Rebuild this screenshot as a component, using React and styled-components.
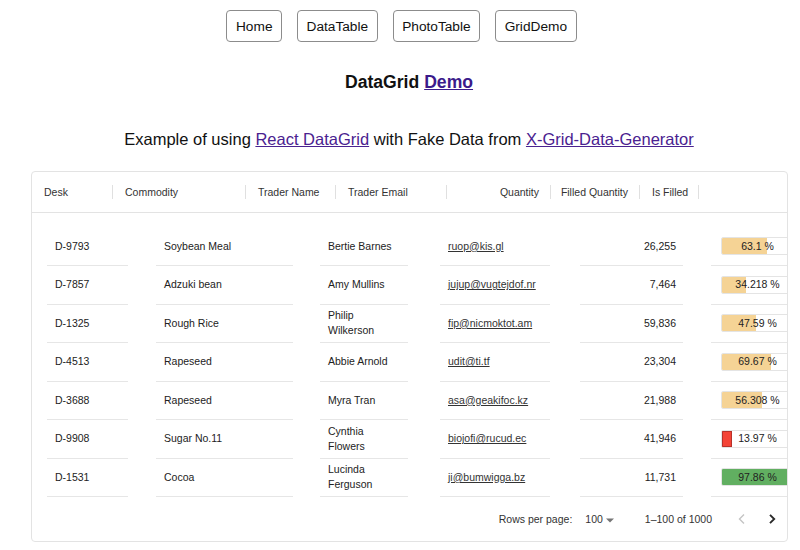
import React from "react";
// styling
import styled, { createGlobalStyle } from "styled-components";

// fake rows like the x-grid-data-generator commodity set
const rows = [
  { desk: "D-9793", commodity: "Soybean Meal", trader: "Bertie Barnes", email: "ruop@kis.gl", quantity: "26,255", filled: 63.1 },
  { desk: "D-7857", commodity: "Adzuki bean", trader: "Amy Mullins", email: "jujup@vugtejdof.nr", quantity: "7,464", filled: 34.218 },
  { desk: "D-1325", commodity: "Rough Rice", trader: "Philip Wilkerson", email: "fip@nicmoktot.am", quantity: "59,836", filled: 47.59 },
  { desk: "D-4513", commodity: "Rapeseed", trader: "Abbie Arnold", email: "udit@ti.tf", quantity: "23,304", filled: 69.67 },
  { desk: "D-3688", commodity: "Rapeseed", trader: "Myra Tran", email: "asa@geakifoc.kz", quantity: "21,988", filled: 56.308 },
  { desk: "D-9908", commodity: "Sugar No.11", trader: "Cynthia Flowers", email: "biojofi@rucud.ec", quantity: "41,946", filled: 13.97 },
  { desk: "D-1531", commodity: "Cocoa", trader: "Lucinda Ferguson", email: "ji@bumwigga.bz", quantity: "11,731", filled: 97.86 },
];

const headers = [
  { label: "Desk", width: 81 },
  { label: "Commodity", width: 133 },
  { label: "Trader Name", width: 90 },
  { label: "Trader Email", width: 111 },
  { label: "Quantity", width: 104, right: true },
  { label: "Filled Quantity", width: 89, right: true },
  { label: "Is Filled", width: 59 },
];

const navItems = ["Home", "DataTable", "PhotoTable", "GridDemo"];

// bar colour by level
const barLevel = (value) => {
  if (value < 30) return "low";
  if (value < 70) return "medium";
  return "high";
};

const ProgressBar = ({ value }) => (
  <BarRoot>
    <BarValue>{value.toLocaleString("en-US", { maximumFractionDigits: 3 })} %</BarValue>
    <Bar $level={barLevel(value)} style={{ width: `${value}%` }} />
  </BarRoot>
);

const App = () => {
  return (
    <>
      <GlobalStyle />
      <Nav>
        {navItems.map((item) => (
          <NavButton key={item}>{item}</NavButton>
        ))}
      </Nav>
      <Title>
        DataGrid <a href="#demo">Demo</a>
      </Title>
      <Subtitle>
        Example of using <a href="#datagrid">React DataGrid</a> with Fake Data
        from <a href="#generator">X-Grid-Data-Generator</a>
      </Subtitle>
      <Grid>
        <Header>
          {headers.map((h) => (
            <HeaderCell key={h.label} $width={h.width} $right={h.right}>
              <span>{h.label}</span>
              <Separator />
            </HeaderCell>
          ))}
        </Header>
        <Body>
          {rows.map((row) => (
            <Row key={row.desk}>
              <Cell $ml={15} $width={81}>{row.desk}</Cell>
              <Cell $ml={28} $width={137}>{row.commodity}</Cell>
              <Cell $ml={27} $width={88}>{row.trader}</Cell>
              <Cell $ml={32} $width={110}>
                <Email href={`mailto:${row.email}`}>{row.email}</Email>
              </Cell>
              <Cell $ml={30} $width={103} $right>
                {row.quantity}
              </Cell>
              <BarCell $ml={28} $width={110}>
                <ProgressBar value={row.filled} />
              </BarCell>
            </Row>
          ))}
        </Body>
        <Footer>
          <span>Rows per page:</span>
          <Select>
            100
            <svg width="10" height="10" viewBox="0 0 10 10">
              <path d="M1 3.5 L5 7.5 L9 3.5 Z" fill="#757575" />
            </svg>
          </Select>
          <Displayed>1–100 of 1000</Displayed>
          <Actions>
            <PageButton>
              <svg width="10" height="12" viewBox="0 0 10 12">
                <path d="M7 1.5 L2.5 6 L7 10.5" fill="none" stroke="#c4c4c4" strokeWidth="1.4" />
              </svg>
            </PageButton>
            <PageButton>
              <svg width="10" height="12" viewBox="0 0 10 12">
                <path d="M3 1.8 L7.2 6 L3 10.2" fill="none" stroke="#2a2a2a" strokeWidth="1.9" />
              </svg>
            </PageButton>
          </Actions>
        </Footer>
      </Grid>
    </>
  );
};

const GlobalStyle = createGlobalStyle`
  body {
    margin: 0;
    background: #ffffff;
    font-family: "Liberation Sans", Arial, Helvetica, sans-serif;
    color: #111;
  }
`;

const Nav = styled.nav`
  display: flex;
  justify-content: center;
  gap: 15px;
  padding-top: 10px;
  padding-left: 3px;
`;

const NavButton = styled.button`
  height: 32px;
  padding: 0 8.5px;
  background: #ffffff;
  border: 1px solid #8c8c8c;
  border-radius: 4px;
  font-family: "Liberation Sans", Arial, sans-serif;
  font-size: 13.7px;
  color: #111;
`;

const Title = styled.h2`
  margin: 30px 0 0;
  padding-left: 18px;
  text-align: center;
  font-size: 17.6px;
  line-height: 20px;
  font-weight: bold;
  a {
    color: #3b1a8b;
  }
`;

const Subtitle = styled.h3`
  margin: 37px 0 0;
  padding-left: 18px;
  text-align: center;
  font-size: 16.5px;
  line-height: 20px;
  font-weight: normal;
  a {
    color: #4a2290;
  }
`;

const Grid = styled.div`
  margin: 22px 0 0 31px;
  width: 757px;
  box-sizing: border-box;
  border: 1px solid #e3e3e3;
  border-radius: 4px;
  overflow: hidden;
  font-size: 10.5px;
  color: #222;
`;

const Header = styled.div`
  display: flex;
  height: 41px;
  border-bottom: 1px solid #e3e3e3;
  box-sizing: border-box;
  color: #333;
`;

const HeaderCell = styled.div`
  position: relative;
  flex: none;
  width: ${(p) => p.$width}px;
  display: flex;
  align-items: center;
  justify-content: ${(p) => (p.$right ? "flex-end" : "flex-start")};
  padding: 0 12px;
  box-sizing: border-box;
  white-space: nowrap;
`;

const Separator = styled.div`
  position: absolute;
  right: 0;
  top: 13px;
  width: 1px;
  height: 14px;
  background: #e0e0e0;
`;

const Body = styled.div`
  padding-top: 14.5px;
`;

const Row = styled.div`
  display: flex;
  height: 38.5px;
`;

const Cell = styled.div`
  flex: none;
  margin-left: ${(p) => p.$ml}px;
  width: ${(p) => p.$width}px;
  display: flex;
  align-items: center;
  justify-content: ${(p) => (p.$right ? "flex-end" : "flex-start")};
  padding: 0 ${(p) => (p.$right ? 7 : 8)}px 0 8px;
  box-sizing: border-box;
  border-bottom: 1px solid #e6e6e6;
  line-height: 15px;
`;

const BarCell = styled(Cell)`
  padding: 0 0 0 10px;
`;

const Email = styled.a`
  color: #333;
  text-decoration: underline;
`;

const BarRoot = styled.div`
  position: relative;
  width: 73px;
  height: 18px;
  box-sizing: border-box;
  border: 1px solid #e4e4e4;
  border-radius: 2px;
  overflow: hidden;
`;

const BarValue = styled.div`
  position: absolute;
  inset: 0;
  display: flex;
  align-items: center;
  justify-content: center;
  color: #222;
  z-index: 1;
`;

const Bar = styled.div`
  height: 100%;
  box-sizing: border-box;
  background: ${(p) =>
    p.$level === "low" ? "#f44336" : p.$level === "medium" ? "#f5d395" : "#61af61"};
  border: ${(p) => (p.$level === "low" ? "1px solid #b7312a" : "none")};
`;

const Footer = styled.div`
  display: flex;
  align-items: center;
  justify-content: flex-end;
  height: 44px;
  color: #333;
`;

const Select = styled.div`
  display: flex;
  align-items: center;
  gap: 2px;
  margin-left: 13px;
  svg {
    margin-top: 1px;
  }
`;

const Displayed = styled.span`
  margin-left: 30px;
`;

const Actions = styled.div`
  display: flex;
  margin-left: 15px;
`;

const PageButton = styled.div`
  width: 30px;
  height: 30px;
  display: flex;
  align-items: center;
  justify-content: center;
`;

export default App;
